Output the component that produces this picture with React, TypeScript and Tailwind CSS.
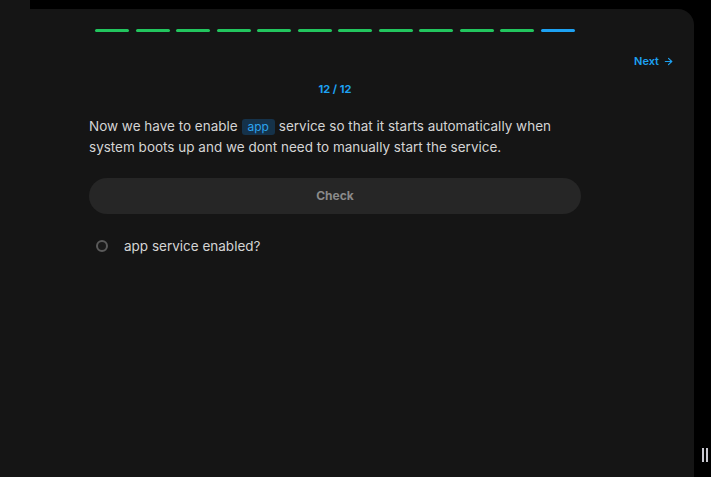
const steps = Array.from({ length: 12 }, (_, i) => i);

export default function App() {
  return (
    <div className="relative h-[477px] w-[711px] overflow-hidden bg-black font-['Inter',sans-serif]">
      {/* sidebar stub */}
      <div className="absolute left-0 top-0 h-[12px] w-[30px] bg-[#151515]" />

      <div className="mt-[9px] flex h-[468px] w-[694px] flex-col rounded-tr-[16px] bg-[#151515]">
        {/* progress */}
        <div className="ml-[89px] mt-[20px] flex w-[492px] justify-center gap-[6.5px]">
          {steps.map((i) => (
            <div
              key={i}
              className={
                i === 11
                  ? "h-[3px] w-[34px] rounded-full bg-[#1da1f2]"
                  : "h-[3px] w-[34px] rounded-full bg-[#22c55e]"
              }
            />
          ))}
        </div>

        <div className="mt-[21px] flex justify-end pr-[20px]">
          <button className="flex items-center gap-[4px] text-[11px] font-semibold text-[#1da1f2]">
            Next
            <svg width="11" height="11" viewBox="0 0 24 24" fill="none" stroke="currentColor" strokeWidth="2.5" strokeLinecap="round" strokeLinejoin="round">
              <path d="M5 12h14" />
              <path d="m12 5 7 7-7 7" />
            </svg>
          </button>
        </div>

        <div className="ml-[89px] w-[492px]">
          <p className="mt-[11px] text-center text-[11px] font-bold text-[#1da1f2]">12 / 12</p>

          <p className="mt-[19px] text-[13.5px] leading-[21px] text-[#d4d4d4]">
            Now we have to enable{" "}
            <code className="inline-block rounded-[3px] bg-[#15324a] px-[6px] leading-[16px] font-['Inter',sans-serif] text-[12px] text-[#2ba3ee]">
              app
            </code>{" "}
            service so that it starts automatically when system boots up and we dont need to manually start the service.
          </p>

          <button className="mt-[20px] h-[36px] w-full rounded-full bg-[#262626] text-[12px] font-bold text-[#8a8a8a]">
            Check
          </button>

          <div className="mt-[22px] flex items-center gap-[16px] pl-[7px]">
            <div className="h-[12px] w-[12px] rounded-full border-2 border-[#5a5a5a] bg-[#1a1a1a]" />
            <span className="text-[13.5px] text-[#d4d4d4]">app service enabled?</span>
          </div>
        </div>
      </div>

      {/* resize handle */}
      <div className="absolute left-[702px] top-[448px] flex gap-[2px]">
        <div className="h-[14px] w-[2px] bg-[#c8c8d0]" />
        <div className="h-[14px] w-[2px] bg-[#c8c8d0]" />
      </div>
    </div>
  );
}
